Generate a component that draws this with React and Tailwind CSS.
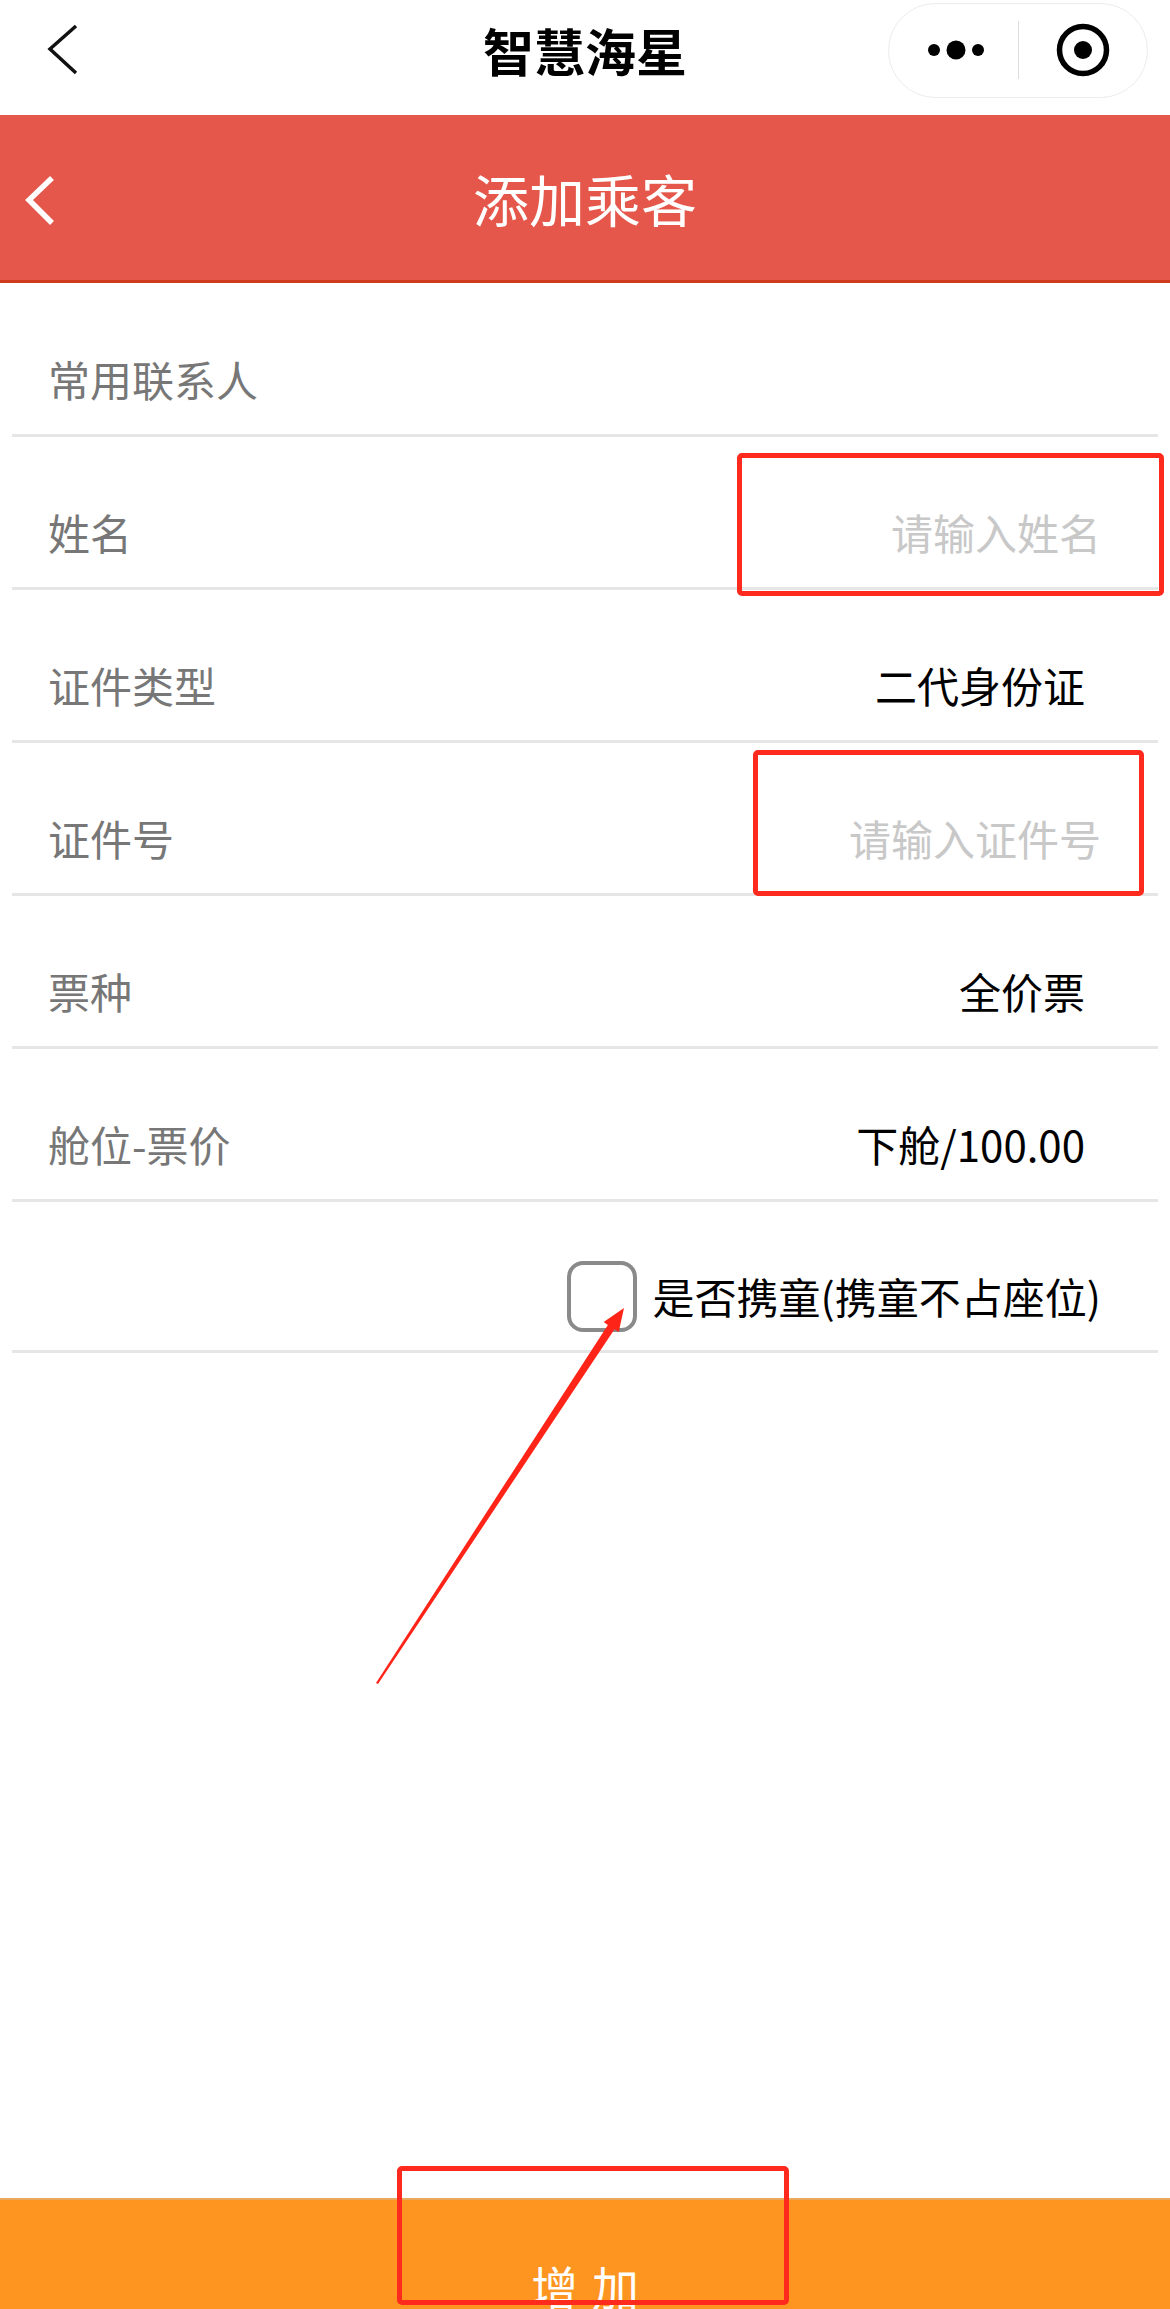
import React from "react";

const FONT = "font-['Noto_Sans_CJK_SC','Noto_Sans',sans-serif]";

function Row({ label, children, first, pr = "pr-[73px]" }) {
  return (
    <div
      className={`mx-[12px] ${first ? "h-[154px]" : "h-[153px]"} border-b-[3px] border-[#e6e6e6] pl-[36px] ${pr} pt-[40px] flex items-center justify-between`}
    >
      <span className="text-[42px] leading-none text-[#777777]">{label}</span>
      {children}
    </div>
  );
}

export default function App() {
  return (
    <div className={`relative w-[1170px] h-[2309px] bg-white flex flex-col overflow-hidden ${FONT}`}>
      {/* WeChat top bar */}
      <div className="h-[115px] pb-[15px] grid grid-cols-[1fr_auto_1fr] items-center bg-white">
        <div className="pl-[44px] flex items-center">
          <svg width="40" height="56" viewBox="0 0 40 56">
            <polyline points="32,4 6,27 32,51" fill="none" stroke="#111" strokeWidth="3.5" />
          </svg>
        </div>
        <div className="text-[51px] leading-none font-bold text-black">智慧海星</div>
        <div className="flex justify-end pr-[22px]">
          <div className="w-[260px] h-[95px] rounded-full border border-[#ececec] flex items-center">
            <div className="w-[130px] flex justify-center pl-[6px]">
              <svg width="60" height="22" viewBox="0 0 60 22">
                <circle cx="8" cy="11" r="6" fill="#000" />
                <circle cx="30" cy="11" r="9.5" fill="#000" />
                <circle cx="52" cy="11" r="6" fill="#000" />
              </svg>
            </div>
            <div className="w-px h-[58px] bg-[#dddddd]" />
            <div className="w-[130px] flex justify-center">
              <svg width="56" height="56" viewBox="0 0 56 56">
                <circle cx="28" cy="28" r="23.5" fill="none" stroke="#000" strokeWidth="5.5" />
                <circle cx="28" cy="28" r="9" fill="#000" />
              </svg>
            </div>
          </div>
        </div>
      </div>

      {/* Red header */}
      <div className="h-[168px] bg-[#e4574a] border-b-[3px] border-[#cf3b1f] grid grid-cols-[1fr_auto_1fr] items-center">
        <div className="pl-[22px] flex items-center pt-[6px]">
          <svg width="40" height="56" viewBox="0 0 40 56">
            <polyline points="30,5 7,27 30,50" fill="none" stroke="#ffffff" strokeWidth="5.5" />
          </svg>
        </div>
        <div className="text-[56px] leading-none text-white">添加乘客</div>
        <div />
      </div>

      {/* Form rows */}
      <Row label="常用联系人" first />
      <Row label="姓名" pr="pr-[57px]">
        <span className="text-[42px] leading-none text-[#c8c8c8]">请输入姓名</span>
      </Row>
      <Row label="证件类型">
        <span className="text-[42px] leading-none text-black">二代身份证</span>
      </Row>
      <Row label="证件号" pr="pr-[57px]">
        <span className="text-[42px] leading-none text-[#c8c8c8]">请输入证件号</span>
      </Row>
      <Row label="票种">
        <span className="text-[42px] leading-none text-black">全价票</span>
      </Row>
      <Row label="舱位-票价">
        <span className="text-[42px] leading-none text-black">下舱/100.00</span>
      </Row>
      <div className="mx-[12px] h-[151px] border-b-[3px] border-[#e6e6e6] pr-[57px] pt-[40px] flex items-center justify-end gap-[16px]">
        <div className="w-[70px] h-[71px] rounded-[16px] border-4 border-[#8a8a8a] bg-white" />
        <span className="text-[42px] leading-none text-black">是否携童(携童不占座位)</span>
      </div>

      {/* Bottom button */}
      <div className="mt-auto h-[111px] bg-[#fd9520] border-t-2 border-[#eaa95c] overflow-hidden flex justify-center pt-[62px] pl-[14px]">
        <span className="text-[47px] leading-none tracking-[14px] text-white">增加</span>
      </div>

      {/* Annotations */}
      <div className="absolute left-[737px] top-[453px] w-[427px] h-[143px] border-[5px] border-[#ff2a1e] rounded-[5px]" />
      <div className="absolute left-[753px] top-[750px] w-[391px] h-[146px] border-[5px] border-[#ff2a1e] rounded-[5px]" />
      <div className="absolute left-[397px] top-[2166px] w-[392px] h-[139px] border-[5px] border-[#ff2a1e] rounded-[5px]" />
      <svg className="absolute left-[370px] top-[1300px]" width="260" height="390" viewBox="0 0 260 390">
        <polygon
          points="6,383 237.9,24.9 233.7,22.1 254,8 248.7,32.1 244.5,29.3 8,384"
          fill="#ff2418"
        />
      </svg>
    </div>
  );
}
